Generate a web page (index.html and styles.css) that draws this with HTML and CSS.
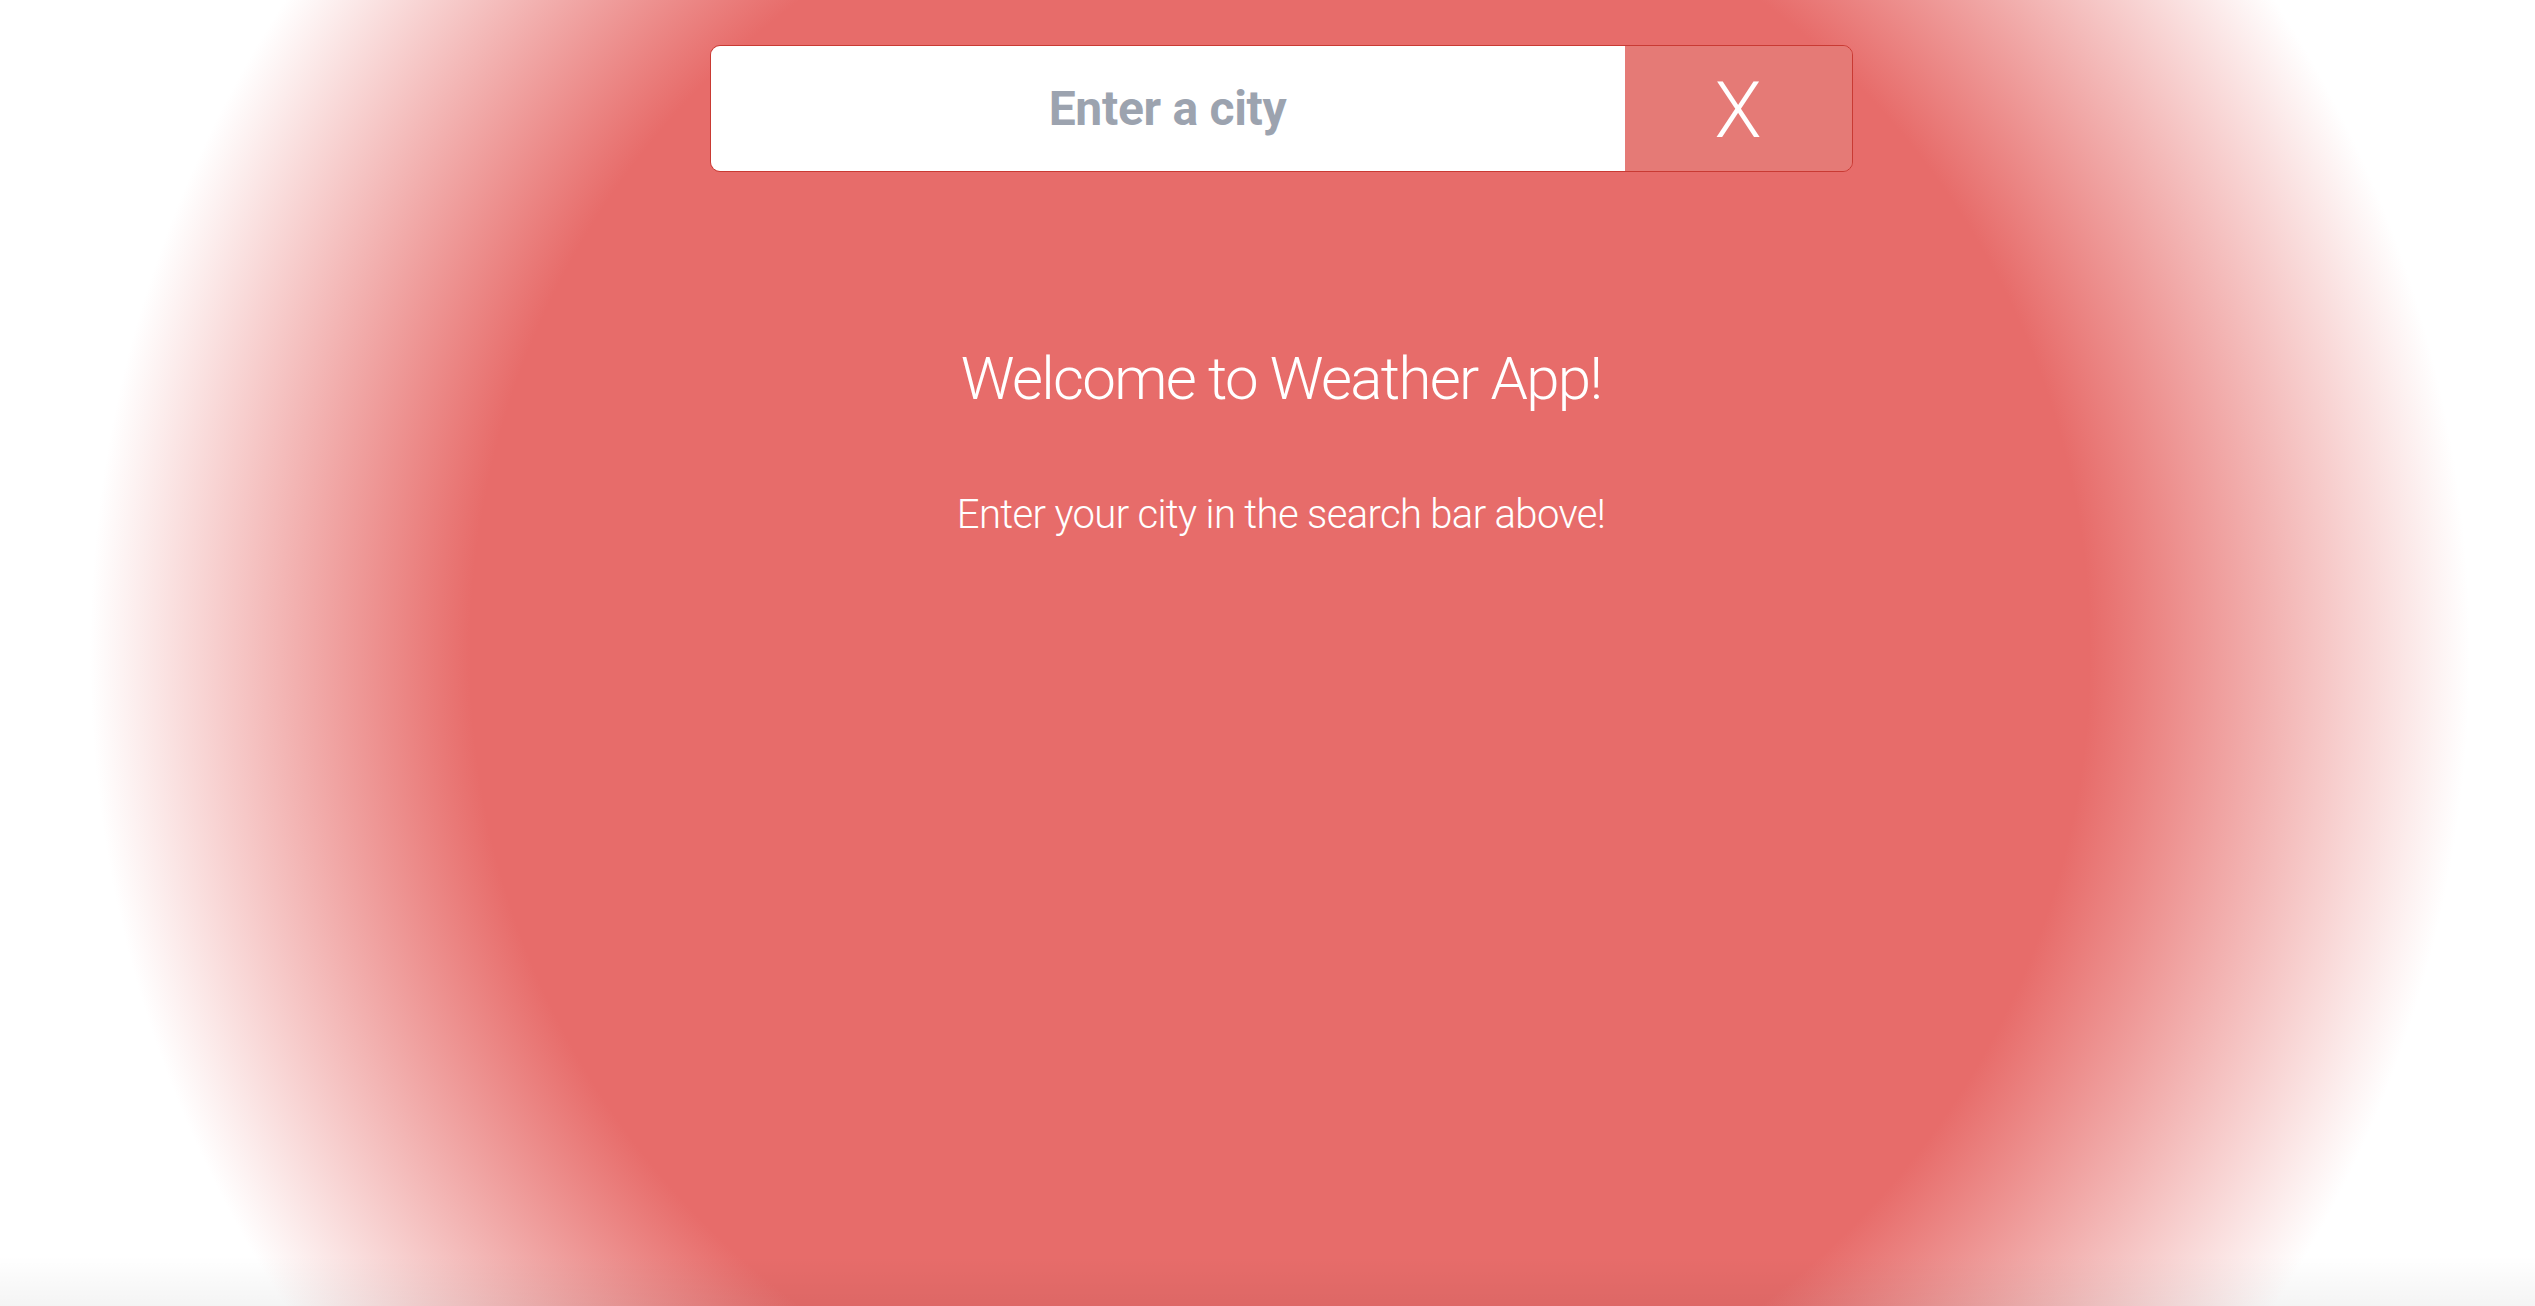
FILE: index.html
```html
<!DOCTYPE html>
<html lang="en">
<head>
<meta charset="utf-8">
<title>Weather App</title>
<link rel="stylesheet" href="styles.css">
</head>
<body class="page">
  <main class="app">
    <form class="search">
      <input class="search-input" type="text" placeholder="Enter a city">
      <button class="search-clear" type="button">X</button>
    </form>
    <section class="welcome">
      <h1 class="welcome-title">Welcome to Weather App!</h1>
      <p class="welcome-text">Enter your city in the search bar above!</p>
    </section>
  </main>
</body>
</html>
```
FILE: styles.css
```css
html, body {
  margin: 0;
  padding: 0;
  height: 100%;
  overflow: hidden;
}

.page {
  font-family: Roboto, "Liberation Sans", Arial, sans-serif;
  background:
    linear-gradient(to bottom, rgba(0,0,0,0) calc(100% - 50px), rgba(0,0,0,0.045) 100%),
    radial-gradient(circle at 1280px 653px, #e76c6a 810px, #ffffff 1190px);
  background-color: #ffffff;
}

.app {
  display: flex;
  flex-direction: column;
  align-items: center;
  padding: 45px 0 0 27px;
}

.search {
  display: flex;
  width: 1143px;
  height: 127px;
  box-sizing: border-box;
  border: 1px solid #c93a33;
  border-radius: 10px;
  overflow: hidden;
  margin: 0;
}

.search-input {
  flex: 1;
  min-width: 0;
  border: 0;
  margin: 0;
  padding: 0;
  background: #ffffff;
  text-align: center;
  font-family: Roboto, "Liberation Sans", Arial, sans-serif;
  font-size: 48px;
  font-weight: 700;
  color: #374151;
  outline: none;
}

.search-input::placeholder {
  color: #9ca3af;
  opacity: 1;
  letter-spacing: -0.3px;
}

.search-clear {
  width: 227px;
  border: 0;
  margin: 0;
  padding: 5px 0 0;
  background: #e57a76;
  color: #ffffff;
  font-family: Roboto, "Liberation Sans", Arial, sans-serif;
  font-size: 77px;
  font-weight: 300;
  line-height: 1;
  cursor: pointer;
}

.welcome {
  display: flex;
  flex-direction: column;
  align-items: center;
  color: #ffffff;
}

.welcome-title {
  margin: 172px 0 0;
  font-size: 60px;
  line-height: 70px;
  font-weight: 300;
  letter-spacing: -1.7px;
}

.welcome-text {
  margin: 77px 0 0;
  font-size: 40px;
  line-height: 47px;
  font-weight: 300;
  letter-spacing: -0.65px;
}
```
